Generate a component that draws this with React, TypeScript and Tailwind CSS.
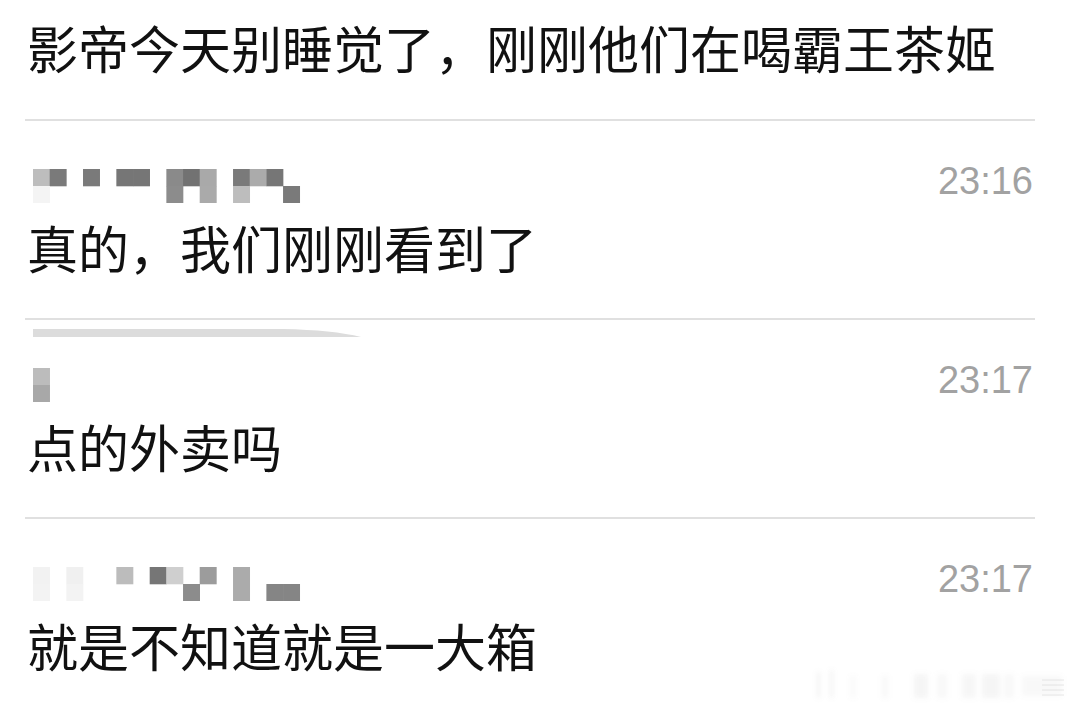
import React from "react";

type Cell = [number, number, string];

const C = 16.67;

function Pixels({ cells }: { cells: Cell[] }) {
  return (
    <svg width={300} height={34} viewBox="0 0 300 34" className="block">
      {cells.map(([col, row, color], i) => (
        <rect
          key={i}
          x={col * C}
          y={row * 17}
          width={C + 0.3}
          height={17.3}
          fill={color}
        />
      ))}
    </svg>
  );
}

const row2: Cell[] = [
  [0, 0, "#bdbdbd"],
  [1, 0, "#7a7a7a"],
  [3, 0, "#7a7a7a"],
  [5, 0, "#767676"],
  [6, 0, "#767676"],
  [8, 0, "#8a8a8a"],
  [9, 0, "#727272"],
  [10, 0, "#a9a9a9"],
  [12, 0, "#7a7a7a"],
  [13, 0, "#ababab"],
  [14, 0, "#767676"],
  [0, 1, "#f4f4f4"],
  [8, 1, "#8c8c8c"],
  [10, 1, "#aaaaaa"],
  [12, 1, "#bdbdbd"],
  [15, 1, "#7a7a7a"],
];

const row3: Cell[] = [
  [0, 0, "#bcbcbc"],
  [0, 1, "#a8a8a8"],
];

const row4: Cell[] = [
  [0, 0, "#f2f2f2"],
  [2, 0, "#f0f0f0"],
  [5, 0, "#bcbcbc"],
  [7, 0, "#767676"],
  [8, 0, "#cfcfcf"],
  [10, 0, "#9c9c9c"],
  [12, 0, "#ababab"],
  [0, 1, "#f3f3f3"],
  [2, 1, "#f3f3f3"],
  [9, 1, "#8c8c8c"],
  [12, 1, "#ababab"],
  [14, 1, "#858585"],
  [15, 1, "#858585"],
];

function Divider() {
  return <div className="ml-[25px] mr-[45px] h-[2px] bg-[#e0e0e0]" />;
}

function Row({
  cells,
  time,
  text,
  swoosh,
}: {
  cells: Cell[];
  time: string;
  text: string;
  swoosh?: boolean;
}) {
  return (
    <div className="relative h-[197px]">
      {swoosh && (
        <svg
          width={340}
          height={10}
          viewBox="0 0 340 10"
          className="absolute left-[33px] top-[8px]"
        >
          <path d="M0,1 L250,1 Q300,2 328,9 L0,9 Z" fill="#dcdcdc" />
        </svg>
      )}
      <div className="flex items-start justify-between pl-[33px] pr-[47px] pt-[41px]">
        <div className="pt-[7px]">
          <Pixels cells={cells} />
        </div>
        <span className="font-['Liberation_Sans',Arial,sans-serif] text-[38px] leading-[38px] text-[#a2a2a2]">
          {time}
        </span>
      </div>
      <div className="mt-[19px] pl-[27px] text-[51px] leading-[51px] text-[#111]">
        {text}
      </div>
    </div>
  );
}

function Watermark() {
  return (
    <svg
      width={280}
      height={40}
      viewBox="0 0 280 40"
      className="absolute right-[8px] bottom-[10px]"
    >
      <defs>
        <filter id="b" x="-20%" y="-50%" width="140%" height="200%">
          <feGaussianBlur stdDeviation="2.6" />
        </filter>
      </defs>
      <g filter="url(#b)" fill="#9a9a9a">
        <rect x="25" y="8" width="3" height="26" opacity="0.14" />
        <rect x="38" y="6" width="3" height="28" opacity="0.12" />
        <rect x="58" y="12" width="6" height="22" opacity="0.06" />
        <rect x="90" y="12" width="6" height="22" opacity="0.07" />
        <rect x="122" y="10" width="14" height="24" opacity="0.1" />
        <rect x="145" y="10" width="10" height="24" opacity="0.07" />
        <rect x="170" y="10" width="14" height="24" opacity="0.09" />
        <rect x="190" y="10" width="18" height="24" opacity="0.1" />
        <rect x="212" y="10" width="10" height="24" opacity="0.07" />
        <rect x="230" y="12" width="40" height="20" opacity="0.07" />
      </g>
      <g stroke="#d6d6d6" strokeWidth="1" opacity="0.6">
        <line x1="250" y1="16" x2="272" y2="16" />
        <line x1="250" y1="21" x2="272" y2="21" />
        <line x1="250" y1="26" x2="272" y2="26" />
        <line x1="250" y1="31" x2="272" y2="31" />
      </g>
    </svg>
  );
}

export default function App() {
  return (
    <div className="relative h-[714px] w-[1080px] overflow-hidden bg-white font-['Noto_Sans_CJK_SC','Noto_Sans',sans-serif]">
      <div className="h-[119px] pl-[27px] pt-[22px] text-[51px] leading-[51px] text-[#111]">
        影帝今天别睡觉了，刚刚他们在喝霸王茶姬
      </div>
      <Divider />
      <Row cells={row2} time="23:16" text="真的，我们刚刚看到了" />
      <Divider />
      <Row cells={row3} time="23:17" text="点的外卖吗" swoosh />
      <Divider />
      <Row cells={row4} time="23:17" text="就是不知道就是一大箱" />
      <Watermark />
    </div>
  );
}
